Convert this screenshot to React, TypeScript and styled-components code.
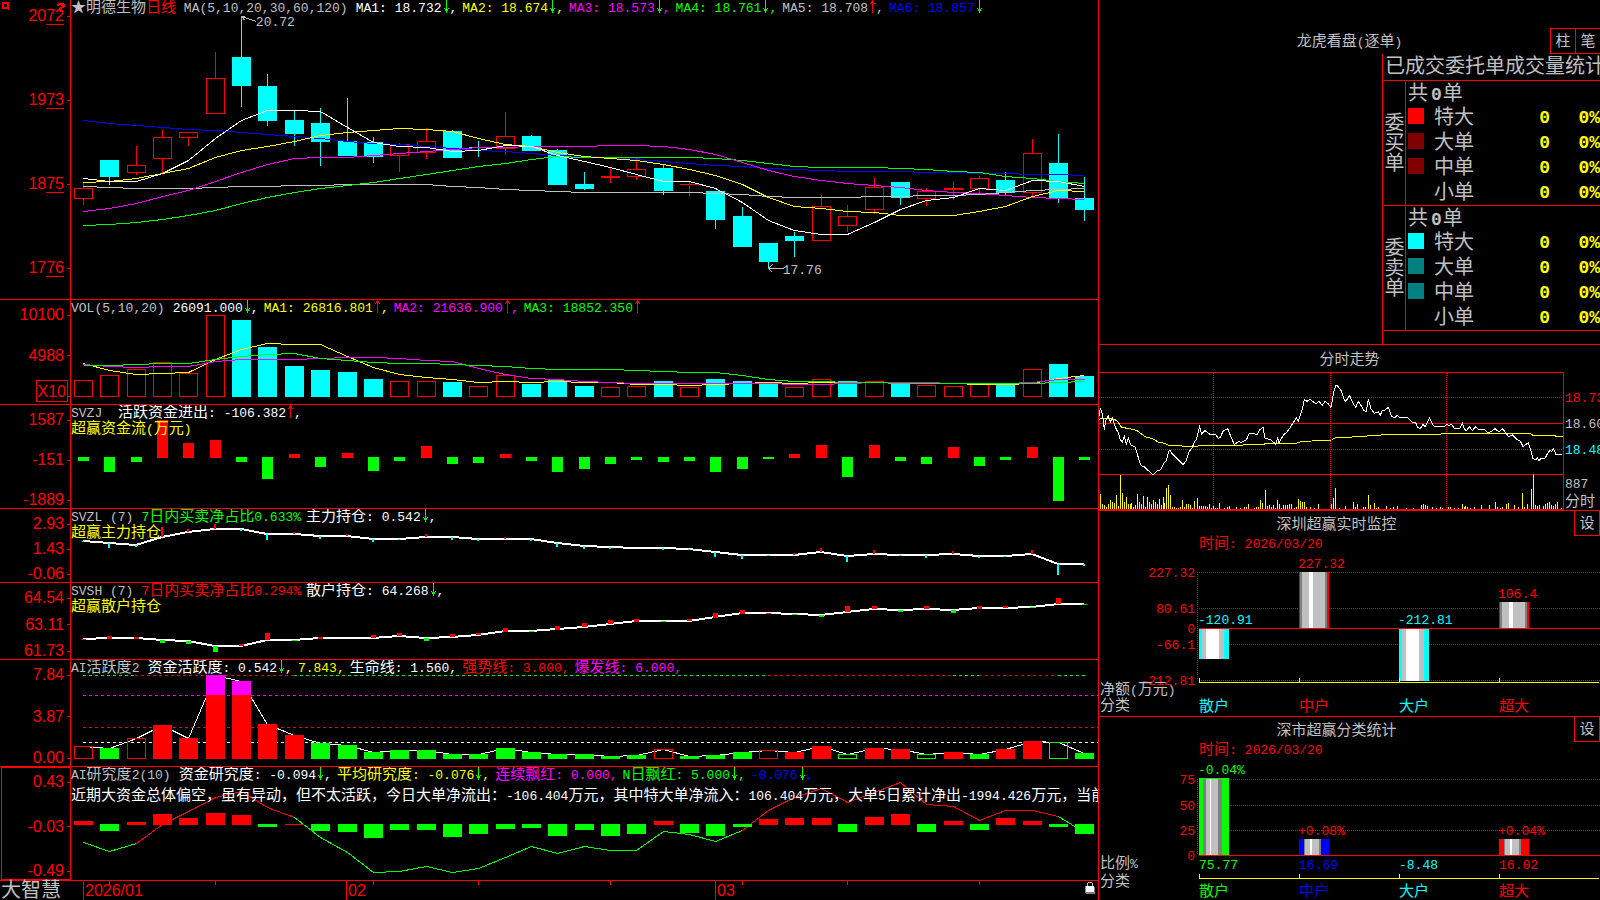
import React from "react";
import styled, { createGlobalStyle } from "styled-components";

const RED = "#ff0000";
const CYAN = "#00ffff";
const GREEN = "#00ff00";
const MAGENTA = "#ff00ff";
const YELLOW = "#ffff00";
const GRAY = "#c0c0c0";
const DARK = "#808080";
const WHITE = "#ffffff";
const BLUE = "#0000ff";

const CJK = `"Noto Sans CJK SC", sans-serif`;
const MONO = `"Liberation Mono", "Noto Sans CJK SC", monospace`;
const SANS = `"Liberation Sans", "Noto Sans CJK SC", sans-serif`;

const Global = createGlobalStyle`
  *, *::before, *::after { box-sizing: border-box; }
  body { margin: 0; background: #000; color: ${GRAY}; font-family: ${CJK}; font-size: 15px; line-height: 15px; }
  button { appearance: none; margin: 0; padding: 0; background: #000; color: inherit; font: inherit; cursor: pointer; }
  h2, h3 { margin: 0; font: inherit; }
  svg { display: block; }
`;

/* ---------- shared text ---------- */

const Latin = styled.span`
  font-family: ${MONO};
  font-size: 13px;
  line-height: 0;
`;

const Run = styled.span<{ $c?: string }>`
  color: ${(p) => p.$c ?? "inherit"};
  white-space: pre;
`;

const WIDE = /([\u2600-\u26ff\u3000-\u9fff\uff00-\uffef]+)/;

/* Chinese glyphs are set at 15px, half-width glyphs in the mono face. */
function Mixed({ children, color }: { children: string; color?: string }) {
  return (
    <Run $c={color}>
      {children.split(WIDE).map((part, i) =>
        part === "" ? null : WIDE.test(part) ? part : <Latin key={i}>{part}</Latin>
      )}
    </Run>
  );
}

/* ---------- page frame ---------- */

const Page = styled.div`
  display: grid;
  grid-template-columns: minmax(0, 1fr) 501px;
  min-height: 100vh;
  overflow: hidden;
  background: #000;
`;

const Main = styled.main`
  display: grid;
  grid-template-rows:
    minmax(300px, 300fr) minmax(105px, 105fr) minmax(104px, 104fr) minmax(74px, 74fr)
    minmax(77px, 77fr) minmax(107px, 107fr) minmax(114px, 114fr) 19px;
  border-right: 1px solid ${RED};
  min-width: 0;
`;

const Panel = styled.section`
  display: grid;
  grid-template-columns: 71px minmax(0, 1fr);
  border-bottom: 1px solid ${RED};
  min-height: 0;
  position: relative;
`;

const Axis = styled.div<{ $top: number; $bottom: number; $active?: boolean }>`
  display: flex;
  flex-direction: column;
  justify-content: space-between;
  padding-top: ${(p) => p.$top}px;
  padding-bottom: ${(p) => p.$bottom}px;
  border-right: 1px solid ${RED};
  ${(p) => p.$active && `border: 1px solid ${RED}; margin-left: 1px;`}
`;

const AxisRow = styled.div`
  display: flex;
  justify-content: flex-end;
  align-items: center;
  gap: 3px;
  height: 16px;
  color: ${RED};
  font: 16px/16px ${SANS};
  &::after {
    content: "";
    width: 3px;
    height: 1px;
    background: ${RED};
  }
`;

const Minor = styled.span`
  text-decoration: underline;
  text-underline-offset: 3px;
  text-decoration-thickness: 1px;
`;

const Unit = styled.span`
  align-self: flex-end;
  height: 22px;
  padding: 0 1px;
  margin: 0 -4px 2px 0;
  border: 1px solid ${RED};
  line-height: 21px;
`;

const Plot = styled.div`
  position: relative;
  overflow: hidden;
  min-width: 0;
`;

const Drawing = styled.svg`
  position: absolute;
  inset: 0;
  width: 100%;
  height: 100%;
  shape-rendering: crispEdges;
`;

const Legend = styled.header`
  position: relative;
  display: flex;
  align-items: baseline;
  gap: 5px;
  height: 13px;
  line-height: 12px;
  white-space: nowrap;
`;

const LegendTitle = styled.h2`
  margin-right: 3px;
`;

const Note = styled.p<{ $c: string; $gap?: number }>`
  position: relative;
  margin: ${(p) => p.$gap ?? 1}px 0 0;
  color: ${(p) => p.$c};
  white-space: nowrap;
`;

const Corner = styled.button<{ $side: "left" | "right" }>`
  position: absolute;
  top: 1px;
  ${(p) => (p.$side === "left" ? "left: 2px;" : "left: 56px;")}
  border: 0;
  background: none;
  color: ${RED};
`;

const Callout = styled.span`
  position: absolute;
  color: ${GRAY};
`;

const ArrowSvg = styled.svg`
  display: inline-block;
  width: 8px;
  height: 14px;
  margin: -4px 0;
  vertical-align: 3px;
  shape-rendering: crispEdges;
`;

function Arrow({ up }: { up?: boolean }) {
  return (
    <ArrowSvg viewBox="0 0 8 14" fill={up ? RED : GREEN} aria-hidden="true">
      {up ? (
        <path d="M4 0h1v14h-1zM3 2h3v2h-3zM2 4h1v1h-1zM6 4h1v1h-1z" />
      ) : (
        <path d="M4 0h1v14h-1zM3 10h3v2h-3zM2 9h1v1h-1zM6 9h1v1h-1z" />
      )}
    </ArrowSvg>
  );
}

type Item = { text: string; color: string; arrow?: "up" | "down"; end?: string };

function LegendBar({ title, items }: { title: React.ReactNode; items: Item[] }) {
  return (
    <Legend>
      <LegendTitle>{title}</LegendTitle>
      {items.map((it, i) => (
        <Run key={i} $c={it.color}>
          <Mixed>{it.text}</Mixed>
          {it.arrow && <Arrow up={it.arrow === "up"} />}
          <Latin>{it.end ?? ","}</Latin>
        </Run>
      ))}
    </Legend>
  );
}

function Scale({ labels, top = 7, bottom = 0, active }: { labels: React.ReactNode[]; top?: number; bottom?: number; active?: boolean }) {
  return (
    <Axis $top={top} $bottom={bottom} $active={active}>
      {labels.map((l, i) => (
        <AxisRow key={i}>{l}</AxisRow>
      ))}
    </Axis>
  );
}

/* ---------- daily data, one entry per trading day ---------- */

const cx = (i: number) => Math.round(83 + i * 26.35);

type Kind = "r" | "c";
const candles: [Kind, number, number, number, number][] = [
  ["r", 188, 199, 183, 205], ["c", 160, 177, 160, 185], ["r", 165, 173, 146, 175], ["r", 137, 159, 130, 173],
  ["r", 132, 138, 132, 146], ["r", 78, 114, 52, 114], ["c", 57, 86, 16, 107], ["c", 86, 121, 74, 126],
  ["c", 120, 134, 111, 146], ["c", 123, 142, 108, 166], ["c", 141, 156, 98, 156], ["c", 142, 157, 137, 163],
  ["r", 144, 156, 143, 172], ["r", 141, 153, 128, 159], ["c", 131, 158, 130, 158], ["c", 147, 148, 141, 157],
  ["r", 136, 149, 112, 155], ["c", 136, 151, 135, 151], ["c", 150, 185, 149, 185], ["c", 184, 189, 172, 190],
  ["r", 176, 178, 168, 183], ["r", 169, 177, 158, 180], ["c", 168, 191, 164, 195], ["r", 184, 185, 182, 196],
  ["c", 191, 220, 191, 229], ["c", 216, 247, 207, 247], ["c", 243, 262, 243, 268], ["c", 236, 241, 232, 257],
  ["r", 206, 241, 195, 241], ["r", 216, 226, 205, 232], ["r", 187, 210, 178, 214], ["c", 182, 198, 182, 205],
  ["r", 191, 199, 188, 206], ["r", 188, 190, 181, 200], ["r", 178, 189, 176, 193], ["c", 180, 193, 172, 195],
  ["r", 153, 193, 139, 197], ["c", 163, 198, 134, 203], ["c", 198, 210, 177, 221],
];

const priceLines: [string, number[]][] = [
  [GRAY, [186, 187, 188, 188, 188, 187, 186, 186, 185, 185, 184, 184, 184, 184, 186, 187, 189, 190, 191, 192, 192, 192, 192, 192, 193, 194, 196, 197, 197, 197, 196, 196, 195, 195, 194, 192, 190, 189, 188]],
  [BLUE, [120, 123, 125, 127, 129, 130, 132, 134, 136, 138, 141, 143, 144, 146, 148, 150, 151, 153, 155, 156, 157, 159, 161, 163, 165, 166, 168, 169, 170, 171, 171, 171, 172, 172, 173, 173, 174, 174, 175]],
  [GREEN, [225, 224, 222, 219, 215, 210, 203, 197, 192, 188, 185, 182, 178, 174, 170, 166, 163, 159, 156, 157, 157, 157, 157, 157, 158, 160, 163, 166, 167, 167, 167, 168, 169, 171, 172, 176, 178, 181, 183]],
  [MAGENTA, [211, 208, 203, 196, 190, 181, 172, 164, 158, 157, 157, 155, 153, 151, 149, 147, 147, 146, 146, 146, 145, 145, 146, 149, 154, 162, 170, 176, 180, 183, 185, 187, 190, 192, 193, 195, 197, 198, 199]],
  [YELLOW, [182, 181, 178, 173, 168, 157, 150, 146, 141, 135, 132, 130, 128, 129, 131, 138, 144, 146, 152, 156, 158, 160, 164, 169, 175, 184, 197, 206, 208, 211, 212, 215, 215, 215, 211, 206, 196, 190, 191]],
  [WHITE, [178, 181, 181, 173, 160, 138, 120, 110, 110, 111, 127, 142, 146, 147, 151, 150, 145, 146, 155, 161, 167, 174, 181, 181, 188, 202, 220, 230, 234, 234, 222, 209, 200, 197, 188, 190, 180, 181, 186]],
];

const volumes: [Kind, number][] = [
  ["r", 80], ["r", 75], ["r", 69], ["r", 62], ["r", 73], ["r", 15], ["c", 20], ["c", 47], ["c", 66], ["c", 70],
  ["c", 72], ["c", 79], ["r", 81], ["r", 81], ["c", 82], ["r", 86], ["r", 75], ["c", 84], ["c", 80], ["c", 86],
  ["r", 87], ["r", 86], ["c", 81], ["r", 87], ["c", 79], ["c", 81], ["c", 83], ["r", 87], ["r", 79], ["c", 81],
  ["r", 81], ["c", 83], ["r", 85], ["r", 86], ["r", 84], ["c", 84], ["r", 69], ["c", 64], ["c", 76],
];

const volumeLines: [string, number[]][] = [
  [YELLOW, [63, 70, 74, 73, 72, 59, 49, 43, 44, 44, 56, 67, 74, 77, 79, 82, 81, 82, 81, 82, 82, 84, 84, 85, 84, 83, 82, 83, 82, 82, 82, 82, 82, 83, 84, 84, 83, 78, 75]],
  [MAGENTA, [64, 66, 67, 66, 66, 61, 59, 59, 59, 58, 57, 57, 58, 60, 61, 68, 74, 78, 79, 81, 82, 83, 83, 83, 83, 83, 83, 84, 84, 83, 82, 82, 82, 83, 83, 83, 82, 79, 79]],
  [GREEN, [65, 65, 64, 63, 63, 59, 56, 54, 53, 58, 60, 62, 63, 63, 64, 65, 66, 68, 69, 69, 69, 70, 71, 72, 72, 75, 79, 81, 81, 82, 82, 83, 83, 83, 83, 83, 83, 82, 81]],
];

const flows = [56, 67, 57, 15, 38, 35, 57, 74, 49, 62, 48, 66, 56, 41, 59, 58, 49, 56, 67, 64, 59, 55, 57, 56, 67, 64, 54, 49, 40, 72, 40, 56, 59, 42, 61, 55, 42, 96, 55];

const mainHold = [32, 34, 36, 28, 23, 20, 20, 25, 25, 27, 27, 30, 30, 28, 28, 30, 30, 30, 34, 37, 38, 39, 39, 40, 43, 46, 46, 46, 43, 47, 45, 46, 46, 45, 47, 47, 45, 55, 55];
const mainTicks = [33, 39, 38, 18, 20, 15, 22, 31, 23, 30, 25, 33, 31, 25, 31, 32, 28, 32, 38, 40, 40, 39, 41, 41, 48, 50, 47, 44, 39, 53, 41, 47, 49, 42, 49, 48, 41, 66, 57];

const retailHold = [56, 55, 55, 57, 58, 63, 63, 57, 57, 55, 55, 55, 53, 55, 54, 52, 48, 48, 46, 44, 41, 38, 38, 38, 34, 30, 30, 31, 32, 29, 26, 27, 26, 27, 25, 25, 24, 21, 21];
const retailMarks: [string, number, number][] = [
  [RED, 56, 1], [RED, 53, 3], [RED, 54, 2], [GREEN, 57, 3], [GREEN, 58, 3], [GREEN, 63, 6], [RED, 61, 2], [RED, 50, 7],
  [GREEN, 57, 1], [RED, 54, 2], [RED, 55, 0], [RED, 52, 3], [RED, 50, 3], [GREEN, 55, 3], [RED, 51, 3], [RED, 50, 2],
  [RED, 45, 4], [GREEN, 48, 1], [RED, 43, 4], [RED, 40, 4], [RED, 37, 4], [RED, 36, 3], [GREEN, 38, 1], [RED, 36, 2],
  [RED, 30, 5], [RED, 27, 4], [RED, 30, 1], [GREEN, 31, 1], [GREEN, 32, 2], [RED, 23, 6], [RED, 23, 3], [GREEN, 27, 2],
  [RED, 23, 3], [GREEN, 27, 3], [RED, 23, 3], [RED, 23, 2], [GREEN, 24, 1], [RED, 15, 6], [GREEN, 21, 1],
];

/* R, G are filled bars; r, g are outlined ones */
const activityKinds = "rGrRRRRRRGGGGGGGGGGGGGrGGGrRRgRRgRGRRgG";
const activity = [86, 88, 78, 65, 78, 15, 21, 64, 75, 83, 85, 92, 90, 90, 94, 94, 88, 92, 94, 94, 96, 95, 89, 96, 95, 92, 90, 92, 86, 94, 88, 89, 94, 92, 94, 89, 81, 82, 93];

const research = [54, 64, 55, 47, 51, 46, 48, 60, 57, 64, 65, 71, 63, 63, 70, 67, 62, 61, 69, 63, 69, 67, 54, 66, 69, 60, 52, 51, 51, 65, 50, 47, 65, 54, 63, 51, 54, 60, 67];
const researchLine = [75, 84, 76, 57, 44, 30, 24, 40, 50, 70, 85, 105, 104, 99, 105, 101, 90, 79, 86, 79, 83, 83, 64, 67, 74, 63, 43, 30, 21, 35, 25, 15, 37, 39, 53, 43, 43, 49, 65];

/* ---------- drawing helpers ---------- */

function Curve({ ys, color, from = 0, width = 1 }: { ys: number[]; color: string; from?: number; width?: number }) {
  const shift = width === 1 ? 0.5 : 0;
  const points = ys.map((y, i) => `${cx(i + from) + shift},${y + shift}`).join(" ");
  return <polyline points={points} fill="none" stroke={color} strokeWidth={width} />;
}

function Bar({ i, y, h, color, hollow }: { i: number; y: number; h: number; color: string; hollow?: boolean }) {
  const x = cx(i) - 9;
  return hollow ? (
    <rect x={x + 0.5} y={y + 0.5} width={18} height={Math.max(h - 1, 1)} fill="none" stroke={color} />
  ) : (
    <rect x={x} y={y} width={19} height={h} fill={color} />
  );
}

function Canvas({ h, children }: { h: number; children: React.ReactNode }) {
  return (
    <Drawing viewBox={`71 0 1027 ${h}`} preserveAspectRatio="none" aria-hidden="true">
      {children}
    </Drawing>
  );
}

function Rule({ y, color, from = 83, to = 1098 }: { y: number; color: string; from?: number; to?: number }) {
  return <line x1={from} x2={to} y1={y + 0.5} y2={y + 0.5} stroke={color} strokeDasharray="3 3" />;
}

/* ---------- left column panels ---------- */

function PricePanel() {
  const ma = (n: number, v: string, color: string, arrow: "up" | "down", end?: string): Item => ({ text: `MA${n}: ${v}`, color, arrow, end });
  const scale = ["2072", "1973", "1875", "1776"].map((v) => (
    <span key={v}>
      {v.slice(0, 2)}
      <Minor>{v.slice(2)}</Minor>
    </span>
  ));
  return (
    <Panel>
      <Scale labels={scale} top={8} bottom={23} />
      <Corner $side="left" aria-label="窗口">
        <svg width="10" height="10" viewBox="0 0 10 10" fill={RED}>
          <path fillRule="evenodd" d="M0 1h7v7h-7zM2 3v3h3v-3z" />
          <path d="M6 8h1v1h-1z" />
        </svg>
      </Corner>
      <Corner $side="right" aria-label="帮助">
        <svg width="10" height="12" viewBox="0 0 10 12" fill={RED}>
          <path d="M2 2h6v1h1v3h-1v1h-2v1h-3v-1h1v-1h2v-1h-1v-1h-2v1h-2v-2h1zM4 9h3v2h-3z" />
        </svg>
      </Corner>
      <Plot>
        <Canvas h={299}>
          {candles.map(([k, top, bottom, high, low], i) => {
            const color = k === "r" ? RED : CYAN;
            const hollow = k === "r" && bottom - top > 3;
            return (
              <g key={i}>
                <rect x={cx(i)} y={high} width={1} height={Math.max(top - high, 0)} fill={color} />
                <rect x={cx(i)} y={bottom} width={1} height={Math.max(low - bottom, 0)} fill={color} />
                <Bar i={i} y={top} h={bottom - top} color={color} hollow={hollow} />
              </g>
            );
          })}
          {priceLines.map(([c, ys]) => (
            <Curve key={c} ys={ys} color={c} />
          ))}
          <path d="M242.5 16.5l4 1M242.5 16.5l2 4M244.5 17.5l12 4" fill="none" stroke={GRAY} />
          <path d="M768.5 268.5h15M768.5 268.5l4 -4M768.5 268.5l4 4" fill="none" stroke={GRAY} />
        </Canvas>
        <LegendBar
          title={
            <>
              <Mixed>★明德生物</Mixed>
              <Mixed color={RED}>日线</Mixed>
              <Mixed> MA(5,10,20,30,60,120)</Mixed>
            </>
          }
          items={[
            ma(1, "18.732", WHITE, "down"),
            ma(2, "18.674", YELLOW, "down"),
            ma(3, "18.573", MAGENTA, "down"),
            ma(4, "18.761", GREEN, "down"),
            ma(5, "18.708", GRAY, "up"),
            ma(6, "18.857", BLUE, "down", " "),
          ]}
        />
        <Callout style={{ left: "18%", top: "4%" }}>
          <Latin>20.72</Latin>
        </Callout>
        <Callout style={{ left: "69.3%", top: "87%" }}>
          <Latin>17.76</Latin>
        </Callout>
      </Plot>
    </Panel>
  );
}

function VolumePanel() {
  return (
    <Panel>
      <Scale labels={["10100", "4988", <Unit key="u">X10</Unit>]} />
      <Plot>
        <Canvas h={104}>
          {volumes.map(([k, y], i) => (
            <Bar key={i} i={i} y={y} h={97 - y} color={k === "r" ? RED : CYAN} hollow={k === "r"} />
          ))}
          {volumeLines.map(([c, ys]) => (
            <Curve key={c} ys={ys} color={c} />
          ))}
        </Canvas>
        <LegendBar
          title={<Mixed>VOL(5,10,20)</Mixed>}
          items={[
            { text: "26091.000", color: WHITE, arrow: "down" },
            { text: "MA1: 26816.801", color: YELLOW, arrow: "up" },
            { text: "MA2: 21636.900", color: MAGENTA, arrow: "up" },
            { text: "MA3: 18852.350", color: GREEN, arrow: "up", end: " " },
          ]}
        />
      </Plot>
    </Panel>
  );
}

function FlowPanel() {
  return (
    <Panel>
      <Scale labels={["1587", "-151", "-1889"]} />
      <Plot>
        <Canvas h={103}>
          {flows.map((y, i) =>
            y < 52 ? (
              <rect key={i} x={cx(i) - 5} y={y} width={11} height={53 - y} fill={RED} />
            ) : (
              <rect key={i} x={cx(i) - 5} y={52} width={11} height={y - 52} fill={GREEN} />
            )
          )}
        </Canvas>
        <LegendBar
          title={<Mixed>{"SVZJ "}</Mixed>}
          items={[{ text: "活跃资金进出: -106.382", color: WHITE, arrow: "up" }]}
        />
        <Note $c={YELLOW}>
          <Mixed>超赢资金流(万元)</Mixed>
        </Note>
      </Plot>
    </Panel>
  );
}

function MainHoldPanel() {
  return (
    <Panel>
      <Scale labels={["2.93", "1.43", "-0.06"]} />
      <Plot>
        <Canvas h={73}>
          <Curve ys={mainHold} color={WHITE} width={2} />
          {mainTicks.map((y, i) => {
            const base = mainHold[i];
            const up = y < base;
            return <rect key={i} x={cx(i) - 1} y={Math.min(y, base)} width={2} height={Math.abs(y - base)} fill={up ? RED : CYAN} />;
          })}
        </Canvas>
        <LegendBar
          title={<Mixed>SVZL (7)</Mixed>}
          items={[
            { text: "7日内买卖净占比0.633%", color: GREEN, end: "" },
            { text: "主力持仓: 0.542", color: WHITE, arrow: "down" },
          ]}
        />
        <Note $c={YELLOW}>超赢主力持仓</Note>
      </Plot>
    </Panel>
  );
}

function RetailHoldPanel() {
  return (
    <Panel>
      <Scale labels={["64.54", "63.11", "61.73"]} />
      <Plot>
        <Canvas h={76}>
          <Curve ys={retailHold} color={WHITE} width={2} />
          {retailMarks.map(([c, y, h], i) => (
            <rect key={i} x={cx(i) - 2} y={y} width={5} height={h} fill={c} />
          ))}
        </Canvas>
        <LegendBar
          title={<Mixed>SVSH (7)</Mixed>}
          items={[
            { text: "7日内买卖净占比0.294%", color: RED, end: "" },
            { text: "散户持仓: 64.268", color: WHITE, arrow: "down" },
          ]}
        />
        <Note $c={YELLOW}>超赢散户持仓</Note>
      </Plot>
    </Panel>
  );
}

function ActivityPanel() {
  return (
    <Panel>
      <Scale labels={["7.84", "3.87", "0.00"]} />
      <Plot>
        <Canvas h={106}>
          <Rule y={15} color={GREEN} to={135} />
          <Rule y={15} color={RED} from={135} to={294} />
          <Rule y={15} color={GREEN} from={294} to={768} />
          <Rule y={15} color={RED} from={768} to={953} />
          <Rule y={15} color={GREEN} from={953} to={979} />
          <Rule y={15} color={RED} from={979} to={1058} />
          <Rule y={15} color={GREEN} from={1058} to={1085} />
          <Rule y={35} color={MAGENTA} />
          <Rule y={67} color={RED} />
          <Rule y={82} color={WHITE} />
          <Curve ys={activity} color={WHITE} />
          {activity.map((y, i) => {
            const k = activityKinds[i];
            const color = k.toLowerCase() === "r" ? RED : GREEN;
            const burst = y < 35;
            return (
              <g key={i}>
                {burst && <Bar i={i} y={y} h={35 - y} color={MAGENTA} />}
                <Bar i={i} y={burst ? 35 : y} h={99 - (burst ? 35 : y)} color={color} hollow={k === "r" || k === "g"} />
              </g>
            );
          })}
        </Canvas>
        <LegendBar
          title={<Mixed>AI活跃度2</Mixed>}
          items={[
            { text: "资金活跃度: 0.542", color: WHITE, arrow: "down" },
            { text: "7.843", color: YELLOW },
            { text: "生命线: 1.560", color: WHITE },
            { text: "强势线: 3.000", color: RED },
            { text: "爆发线: 6.000", color: MAGENTA },
          ]}
        />
      </Plot>
    </Panel>
  );
}

function ResearchPanel() {
  return (
    <Panel>
      <Scale labels={["0.43", "-0.03", "-0.49"]} top={6} active />
      <Plot>
        <Canvas h={113}>
          <Curve ys={researchLine.slice(0, 3)} color={GREEN} />
          <Curve ys={researchLine.slice(2, 9)} from={2} color={RED} />
          <Curve ys={researchLine.slice(8, 26)} from={8} color={GREEN} />
          <Curve ys={researchLine.slice(25, 38)} from={25} color={RED} />
          <Curve ys={researchLine.slice(37)} from={37} color={GREEN} />
          {research.map((y, i) =>
            y <= 57 ? (
              <Bar key={i} i={i} y={y} h={58 - y} color={RED} />
            ) : (
              <Bar key={i} i={i} y={57} h={y - 57} color={GREEN} />
            )
          )}
        </Canvas>
        <LegendBar
          title={<Mixed>AI研究度2(10)</Mixed>}
          items={[
            { text: "资金研究度: -0.094", color: WHITE, arrow: "down" },
            { text: "平均研究度: -0.076", color: YELLOW, arrow: "down" },
            { text: "连续飘红: 0.000", color: MAGENTA },
            { text: "N日飘红: 5.000", color: GREEN, arrow: "down" },
            { text: "-0.076", color: BLUE, arrow: "down" },
          ]}
        />
        <Note $c={WHITE} $gap={6}>
          <Mixed>
            近期大资金总体偏空，虽有异动，但不太活跃，今日大单净流出：-106.404万元，其中特大单净流入：106.404万元，大单5日累计净出-1994.426万元，当前
          </Mixed>
        </Note>
      </Plot>
    </Panel>
  );
}

const Footer = styled.footer`
  display: grid;
  grid-template-columns: 71px 12px 263fr 369fr 383fr;
  position: relative;
`;

const Brand = styled.strong`
  padding-left: 1px;
  font-size: 20px;
  font-weight: 400;
  line-height: 16px;
  white-space: nowrap;
`;

const Month = styled.div`
  display: flex;
  justify-content: space-between;
  padding: 0 3px 0 1px;
  border-left: 1px solid ${RED};
  color: ${RED};
  font: 16px/19px ${SANS};
`;

const ShortTicks = styled.svg`
  position: absolute;
  left: 71px;
  top: 0;
  width: calc(100% - 71px);
  height: 4px;
  shape-rendering: crispEdges;
`;

function TimeAxis() {
  return (
    <Footer>
      <Brand>大智慧</Brand>
      <span />
      <Month>2026/01</Month>
      <Month>02</Month>
      <Month>
        03
        <svg width="10" height="13" viewBox="0 0 10 13" shapeRendering="crispEdges" aria-hidden="true">
          <path d="M3 1h4v1h-4zM2 2h1v3h-1zM7 2h1v3h-1z" fill={GRAY} />
          <path d="M0 5h9v7h-9z" fill={DARK} />
          <path d="M1 5h8v6h-8z" fill={WHITE} />
          <path d="M9 6h1v7h-9v-1h8z" fill={DARK} />
        </svg>
      </Month>
      <ShortTicks viewBox="71 0 1027 4" preserveAspectRatio="none" aria-hidden="true">
        {[1, 5, 11, 15, 20, 25, 29, 34].map((i) => (
          <rect key={i} x={cx(i)} y={0} width={1} height={4} fill={RED} />
        ))}
      </ShortTicks>
    </Footer>
  );
}

/* ---------- right column ---------- */

const Side = styled.aside`
  display: grid;
  grid-template-rows: 345px 166px 206px minmax(183px, 1fr);
  min-width: 0;
  overflow: hidden;
`;

const Card = styled.section`
  display: flex;
  flex-direction: column;
  min-width: 0;
  overflow: hidden;
  border-bottom: 1px solid ${RED};
  &:last-child {
    border-bottom: 0;
  }
`;

const CardHead = styled.header<{ $top?: number; $h: number }>`
  display: flex;
  align-items: stretch;
  height: ${(p) => p.$h}px;
  margin-top: ${(p) => p.$top ?? 0}px;
  flex: none;
`;

const CardTitle = styled.h2<{ $shift?: number }>`
  flex: 1;
  align-self: center;
  margin-left: ${(p) => p.$shift ?? 0}px;
  padding-bottom: 3px;
  text-align: center;
`;

const TabButton = styled.button`
  width: 25px;
  padding-bottom: 3px;
  border: 1px solid ${RED};
  border-right: 0;
`;

const SetButton = styled.button`
  width: 26px;
  padding-bottom: 3px;
  border: 1px solid ${RED};
  border-top: 0;
`;

const OrderBox = styled.div`
  flex: 1;
  align-self: flex-end;
  width: 218px;
  padding-left: 1px;
  border-left: 1px solid ${RED};
`;

const OrderTitle = styled.h3`
  height: 26px;
  padding: 1px 0 0 1px;
  overflow: hidden;
  font-size: 20px;
  line-height: 20px;
  white-space: nowrap;
`;

const Orders = styled.table`
  width: 100%;
  table-layout: fixed;
  border-collapse: separate;
  border-spacing: 0;
  border-bottom: 1px solid ${RED};
  font-size: 20px;
  line-height: 20px;
  white-space: nowrap;
  th,
  td {
    padding: 0 0 2px;
    font-weight: 400;
    text-align: left;
    vertical-align: middle;
  }
`;

const Col = styled.col<{ $w?: number }>`
  width: ${(p) => (p.$w ? `${p.$w}px` : "auto")};
`;

const SideHead = styled.th`
  border-right: 1px solid ${RED};
  border-top: 1px solid ${RED};
  span {
    display: block;
    width: 20px;
    margin: 0 auto;
    white-space: normal;
    word-break: break-all;
  }
`;

const Total = styled.td`
  height: 24px;
  border-top: 1px solid ${RED};
  && {
    padding-left: 2px;
  }
`;

const OrderRow = styled.tr<{ $last?: boolean }>`
  height: ${(p) => (p.$last ? 26 : 25)}px;
`;

const NameCell = styled.td`
  > div {
    display: flex;
    align-items: center;
    gap: 10px;
    padding-left: 2px;
  }
`;

const Swatch = styled.i<{ $c: string }>`
  width: 16px;
  height: 16px;
  background: ${(p) => p.$c};
`;

const Figure = styled.span<{ $c?: string }>`
  color: ${(p) => p.$c ?? "inherit"};
  font: bold 18px/0 ${MONO};
`;

const TotalFigure = styled(Figure)`
  margin: 0 1px 0 3px;
`;

const NumCell = styled.td`
  && {
    padding-bottom: 4px;
    text-align: right;
  }
`;

function OrderGroup({ head, colors }: { head: string; colors: string[] }) {
  const names = ["特大", "大单", "中单", "小单"];
  return (
    <tbody>
      <tr>
        <SideHead rowSpan={5} scope="rowgroup">
          <span>{head}</span>
        </SideHead>
        <Total colSpan={3}>
          共<TotalFigure>0</TotalFigure>单
        </Total>
      </tr>
      {names.map((n, i) => (
        <OrderRow key={n} $last={i === 3}>
          <NameCell>
            <div>
              <Swatch $c={colors[i]} />
              {n}
            </div>
          </NameCell>
          <NumCell>
            <Figure $c={YELLOW}>0</Figure>
          </NumCell>
          <NumCell>
            <Figure $c={YELLOW}>0%</Figure>
          </NumCell>
        </OrderRow>
      ))}
    </tbody>
  );
}

function OrdersCard() {
  return (
    <Card>
      <CardHead $top={28} $h={26}>
        <CardTitle $shift={50}>
          <Mixed>龙虎看盘(逐单)</Mixed>
        </CardTitle>
        <TabButton>柱</TabButton>
        <TabButton>笔</TabButton>
      </CardHead>
      <OrderBox>
        <OrderTitle id="orders-title">已成交委托单成交量统计</OrderTitle>
        <Orders aria-labelledby="orders-title">
          <colgroup>
            <Col $w={22} />
            <Col />
            <Col $w={60} />
            <Col $w={50} />
          </colgroup>
          <OrderGroup head="委买单" colors={[RED, "#800000", "#800000", "transparent"]} />
          <OrderGroup head="委卖单" colors={[CYAN, "#008080", "#008080", "transparent"]} />
        </Orders>
      </OrderBox>
    </Card>
  );
}

/* Intraday curves use three units per pixel for finer steps. */
const minutePrice =
  "13,228 16,203 22,222 28,270 32,243 40,228 46,246 52,234 58,252 64,268 70,278 76,300 82,306 88,290 94,312 100,294 108,316 120,320 126,338 134,368 140,378 148,380 160,392 172,403 178,402 186,393 196,390 208,368 214,362 222,332 226,332 232,342 264,374 274,362 282,335 292,322 298,306 304,298 314,260 320,282 330,272 344,282 360,282 370,295 376,292 384,274 398,266 406,286 418,314 432,304 438,308 454,300 462,282 474,280 486,284 494,270 504,262 510,294 526,299 542,312 548,295 552,308 566,284 576,276 586,262 604,233 610,244 622,208 628,178 636,184 646,178 658,188 664,190 672,184 682,196 690,184 700,192 708,202 716,158 722,136 726,136 740,154 746,176 752,184 764,167 774,190 782,202 790,184 800,200 806,212 814,214 820,178 828,206 838,220 850,216 856,226 862,210 870,210 880,202 890,230 900,232 906,226 914,232 938,233 950,246 962,248 968,262 976,266 984,252 990,260 998,244 1004,234 1016,258 1048,259 1056,252 1062,258 1068,252 1078,265 1096,264 1102,250 1108,266 1114,272 1124,260 1132,272 1142,260 1150,268 1168,268 1176,276 1186,276 1200,266 1212,276 1222,266 1234,280 1240,290 1252,284 1264,297 1276,303 1284,320 1300,308 1308,334 1314,356 1322,360 1328,354 1332,362 1338,355 1350,355 1358,340 1364,332 1370,334 1376,326 1382,342 1402,342";
const minuteAverage =
  "12,240 18,235 40,236 58,238 68,244 80,262 108,267 126,272 150,290 172,296 190,306 208,310 220,316 260,317 264,319 308,319 310,316 442,316 446,313 508,313 510,310 604,310 620,304 650,303 660,301 710,300 722,293 770,292 772,289 814,289 820,286 858,286 860,283 1036,283 1040,280 1306,281 1314,286 1380,287 1384,290 1404,290";
const minuteVolume =
  "16,462 22,492 28,495 34,500 40,492 46,480 52,486 58,489 64,465 70,498 76,405 82,459 88,486 94,471 100,492 106,492 109,489 115,500 121,495 127,462 133,486 139,492 145,468 151,500 157,471 163,486 169,492 175,480 181,486 187,492 193,477 199,495 205,471 208,489 214,444 220,435 226,465 232,500 238,500 244,504 250,504 256,500 262,480 268,500 274,492 280,492 286,495 292,504 298,483 307,474 313,498 319,498 325,498 331,498 337,500 343,492 349,504 355,498 361,503 367,503 373,489 388,504 397,500 403,498 424,500 436,504 448,500 454,500 460,492 478,503 484,500 490,500 496,480 502,489 511,450 517,498 523,495 529,500 535,495 541,504 547,480 553,492 559,504 565,495 571,495 577,495 583,492 589,492 598,503 604,500 610,477 616,483 622,486 628,486 634,500 646,500 658,503 670,492 709,492 715,474 721,444 733,503 751,498 775,486 781,500 787,492 805,500 811,500 820,465 826,495 838,489 844,503 850,500 874,498 886,503 895,500 907,498 934,503 955,503 979,495 985,492 991,495 997,498 1012,500 1024,504 1036,500 1042,504 1060,500 1066,500 1078,503 1090,503 1102,492 1108,500 1111,498 1117,500 1126,503 1138,500 1159,495 1183,495 1201,486 1207,500 1216,503 1222,500 1234,492 1240,489 1258,495 1270,500 1282,459 1288,500 1297,492 1309,447 1315,402 1321,495 1327,498 1333,495 1345,498 1351,492 1357,489 1363,486 1369,495 1375,498 1381,492 1387,486 1399,503";

const Minute = styled.div`
  flex: 1;
  display: grid;
  grid-template-columns: minmax(0, 1fr) 36px;
  grid-template-rows: minmax(0, 1fr);
  min-height: 0;
`;

const MinutePlot = styled.div`
  position: relative;
  border: 1px solid ${RED};
  border-left: 0;
  line,
  polyline {
    vector-effect: non-scaling-stroke;
  }
`;

const Quotes = styled.div`
  display: flex;
  flex-direction: column;
  gap: 11px;
  padding: 16px 0 0 1px;
  overflow: hidden;
  white-space: nowrap;
`;

const Period = styled.div`
  display: flex;
  flex-direction: column;
  gap: 3px;
  margin-top: 8px;
`;

function MinuteCard() {
  return (
    <Card>
      <CardHead $h={27}>
        <CardTitle>分时走势</CardTitle>
      </CardHead>
      <Minute>
        <MinutePlot>
          <Drawing viewBox="12 99 1392 408" preserveAspectRatio="none" aria-hidden="true">
            {[173, 329].map((y) => (
              <line key={y} x1={12} x2={1404} y1={y} y2={y} stroke={RED} strokeDasharray="1 1" />
            ))}
            {[356, 707, 1055].map((x) => (
              <line key={x} x1={x} x2={x} y1={99} y2={507} stroke={RED} strokeDasharray="1 1" />
            ))}
            <line x1={12} x2={1404} y1={251} y2={251} stroke={RED} />
            <line x1={12} x2={1404} y1={404} y2={404} stroke={RED} />
            <polyline points={minuteAverage} fill="none" stroke={YELLOW} />
            <polyline points={minutePrice} fill="none" stroke={WHITE} />
            {minuteVolume.split(" ").map((p) => {
              const [x, y] = p.split(",").map(Number);
              return <rect key={x} x={x - (x % 3)} y={y} width={3} height={507 - y} fill={YELLOW} />;
            })}
          </Drawing>
        </MinutePlot>
        <Quotes>
          <Mixed color={RED}>18.73</Mixed>
          <Mixed>18.60</Mixed>
          <Mixed color={CYAN}>18.48</Mixed>
          <Period>
            <Mixed>887</Mixed>
            <Mixed>分时</Mixed>
          </Period>
        </Quotes>
      </Minute>
    </Card>
  );
}

/* ---------- grouped bar cards ---------- */

const DateLine = styled.div`
  flex: none;
  height: 15px;
  padding-left: 100px;
  color: ${RED};
  line-height: 11px;
`;

const BarArea = styled.div<{ $h: number }>`
  flex: none;
  display: grid;
  grid-template-columns: 98px minmax(0, 1fr);
  height: ${(p) => p.$h}px;
`;

const Values = styled.div`
  position: relative;
`;

const ValueLabel = styled.span<{ $c: string }>`
  position: absolute;
  color: ${(p) => p.$c};
  white-space: nowrap;
`;

const Under = styled.div`
  flex: none;
  display: grid;
  grid-template-columns: 100px minmax(0, 1fr);
`;

const Names = styled.div<{ $lh: number }>`
  position: relative;
  margin-top: -3px;
  padding-left: 1px;
  line-height: ${(p) => p.$lh}px;
`;

const Cells = styled.div<{ $h: number; $lh: number }>`
  display: grid;
  grid-template-columns: repeat(4, minmax(0, 1fr));
  height: ${(p) => p.$h}px;
  padding-right: 1px;
  line-height: ${(p) => p.$lh}px;
`;

const Spacer = styled.div<{ $h: number }>`
  height: ${(p) => p.$h}px;
`;

type Stripe = [number, number, string];
const pillar = (edge: string): Stripe[] => [[0, 30, edge], [1, 27, DARK], [3, 23, GRAY], [10, 4, WHITE]];
const hollowPillar: Stripe[] = [[0, 30, CYAN], [3, 22, GRAY], [7, 13, WHITE]];
const narrow = (edge: string): Stripe[] => [[0, 30, edge], [5, 17, DARK], [6, 14, GRAY], [11, 2, WHITE]];

type Column = { value: string; color: string; labelY: number; y: number; h: number; stripes: Stripe[]; cap?: string };

function Columns({ h, axis, zero, grid, columns, rail }: { h: number; axis: [string, number][]; zero: number; grid: number[]; columns: Column[]; rail?: boolean }) {
  const last = rail ? h - 3 : zero;
  return (
    <BarArea $h={h}>
      <Values>
        {axis.map(([label, y]) => (
          <ValueLabel key={label} $c={RED} style={{ right: 2, top: y - 10 }}>
            <Latin>{label}</Latin>
          </ValueLabel>
        ))}
      </Values>
      <Values>
        <Drawing viewBox={`0 0 403 ${h}`} preserveAspectRatio="none" aria-hidden="true">
          <line x1={0.5} x2={0.5} y1={grid[0]} y2={last} stroke={RED} strokeDasharray="1 1" />
          {grid.map((y) => (
            <line key={y} x1={2} x2={403} y1={y + 0.5} y2={y + 0.5} stroke={RED} strokeDasharray="1 1" />
          ))}
          {columns.map((c, i) =>
            c.h ? (
              <g key={i}>
                {c.stripes.map(([x, w, fill]) => (
                  <rect key={x} x={2 + i * 100 + x} y={c.y} width={w} height={c.h} fill={fill} />
                ))}
                {c.cap && <rect x={2 + i * 100} y={c.y} width={30} height={1} fill={c.cap} />}
              </g>
            ) : null
          )}
          <rect x={2} y={zero} width={401} height={1} fill={RED} />
          {rail && <path d={`M2 ${h - 5}h1v4h399v1h-400zM102 ${h - 5}h1v4h-1zM202 ${h - 5}h1v4h-1zM302 ${h - 5}h1v4h-1z`} fill={YELLOW} />}
        </Drawing>
        {columns.map((c, i) =>
          c.value ? (
            <ValueLabel key={i} $c={c.color} style={{ left: `${((i * 100 + 1) / 403) * 100}%`, top: c.labelY - 10 }}>
              <Latin>{c.value}</Latin>
            </ValueLabel>
          ) : null
        )}
      </Values>
    </BarArea>
  );
}

const Rail = styled.svg`
  width: 100%;
  height: 5px;
  shape-rendering: crispEdges;
`;

function NetCard() {
  const colors = [CYAN, RED, CYAN, RED];
  return (
    <Card>
      <CardHead $h={25}>
        <CardTitle>深圳超赢实时监控</CardTitle>
        <SetButton>设</SetButton>
      </CardHead>
      <DateLine>
        <Mixed>时间: 2026/03/20</Mixed>
      </DateLine>
      <Columns
        h={132}
        rail
        zero={77}
        grid={[21, 57, 93, 129]}
        axis={[["227.32", 22], ["80.61", 58], ["0", 78], ["-66.1", 94], ["-212.81", 130]]}
        columns={[
          { value: "-120.91", color: CYAN, labelY: 69, y: 78, h: 30, stripes: hollowPillar },
          { value: "227.32", color: RED, labelY: 13, y: 21, h: 56, stripes: pillar(RED) },
          { value: "-212.81", color: CYAN, labelY: 69, y: 78, h: 52, stripes: hollowPillar },
          { value: "106.4", color: RED, labelY: 43, y: 51, h: 26, stripes: pillar(RED) },
        ]}
      />
      <Under>
        <Names $lh={16}>
          <Mixed>净额(万元)</Mixed>
          <div>分类</div>
        </Names>
        <div>
          <Spacer $h={15} />
          <Cells $h={15} $lh={13}>
            {["散户", "中户", "大户", "超大"].map((n, i) => (
              <Run key={n} $c={colors[i]}>
                {n}
              </Run>
            ))}
          </Cells>
        </div>
      </Under>
    </Card>
  );
}

function RatioCard() {
  const colors = [GREEN, BLUE, CYAN, RED];
  return (
    <Card>
      <CardHead $h={25}>
        <CardTitle>深市超赢分类统计</CardTitle>
        <SetButton>设</SetButton>
      </CardHead>
      <DateLine>
        <Mixed>时间: 2026/03/20</Mixed>
      </DateLine>
      <Columns
        h={99}
        zero={98}
        grid={[22, 48, 73]}
        axis={[["75", 23], ["50", 49], ["25", 74], ["0", 99]]}
        columns={[
          { value: "-0.04%", color: GREEN, labelY: 13, y: 21, h: 77, stripes: [[0, 30, GREEN], [4, 19, DARK], [7, 12, GRAY], [11, 1, WHITE]], cap: GREEN },
          { value: "+0.08%", color: RED, labelY: 74, y: 82, h: 16, stripes: narrow(BLUE) },
          { value: "", color: CYAN, labelY: 74, y: 0, h: 0, stripes: [] },
          { value: "+0.04%", color: RED, labelY: 74, y: 82, h: 16, stripes: narrow(RED) },
        ]}
      />
      <Under>
        <Names $lh={18}>
          <Mixed>比例%</Mixed>
          <div>分类</div>
        </Names>
        <div>
          <Cells $h={18} $lh={14}>
            {["75.77", "16.69", "-8.48", "16.02"].map((n, i) => (
              <Mixed key={n} color={colors[i]}>
                {n}
              </Mixed>
            ))}
          </Cells>
          <Rail viewBox="0 0 401 5" preserveAspectRatio="none" aria-hidden="true">
            <path d="M0 0h1v4h399v1h-400zM100 0h1v4h-1zM200 0h1v4h-1zM300 0h1v4h-1z" fill={YELLOW} />
          </Rail>
          <Cells $h={21} $lh={21}>
            {["散户", "中户", "大户", "超大"].map((n, i) => (
              <Run key={n} $c={colors[i]}>
                {n}
              </Run>
            ))}
          </Cells>
        </div>
      </Under>
    </Card>
  );
}

export default function App() {
  return (
    <Page>
      <Global />
      <Main>
        <PricePanel />
        <VolumePanel />
        <FlowPanel />
        <MainHoldPanel />
        <RetailHoldPanel />
        <ActivityPanel />
        <ResearchPanel />
        <TimeAxis />
      </Main>
      <Side>
        <OrdersCard />
        <MinuteCard />
        <NetCard />
        <RatioCard />
      </Side>
    </Page>
  );
}
